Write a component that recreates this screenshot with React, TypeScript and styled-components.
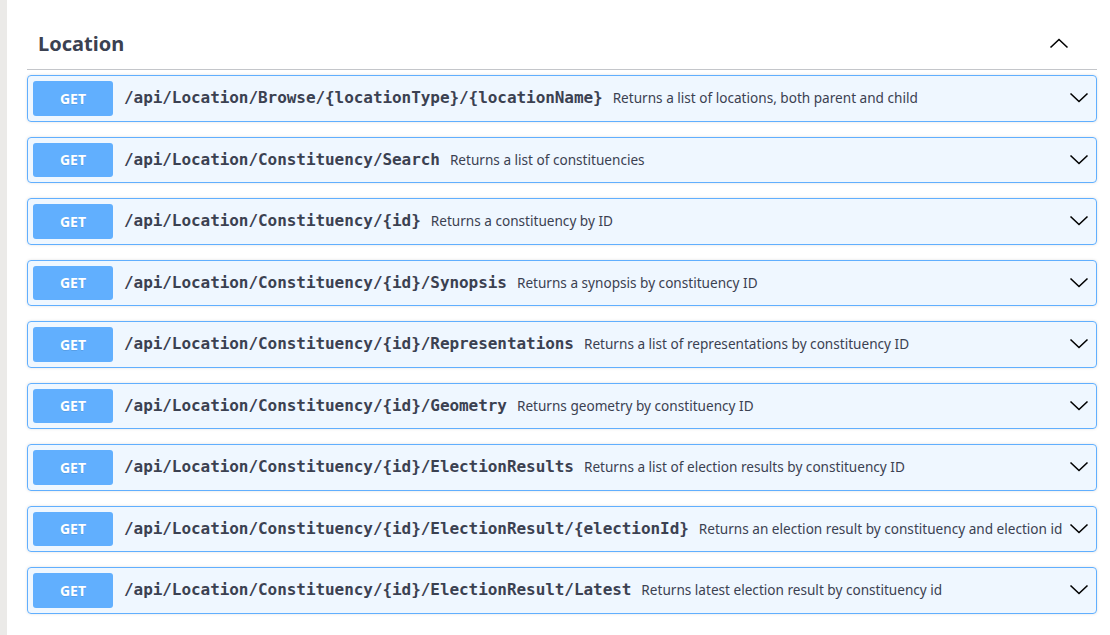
import React from 'react';
import styled, { createGlobalStyle } from 'styled-components';

const GlobalStyle = createGlobalStyle`
  html, body {
    margin: 0;
    padding: 0;
    background: #ffffff;
  }
  * {
    box-sizing: border-box;
  }
`;

const Page = styled.div`
  min-height: 100vh;
  border-left: 7px solid #ebeae8;
  padding: 0 13px 0 20px;
  font-family: "Noto Sans", "Open Sans", sans-serif;
  color: #3b4151;
`;

const TagHeader = styled.div`
  display: flex;
  align-items: center;
  justify-content: space-between;
  height: 70px;
  padding: 18px 26px 0 11px;
  border-bottom: 1px solid rgba(59, 65, 81, 0.3);
  margin-bottom: 5px;
`;

const TagTitle = styled.h4`
  margin: 0;
  font-size: 20px;
  font-weight: 700;
  color: #3b4151;
`;

const OpList = styled.div`
  display: flex;
  flex-direction: column;
  gap: 15px;
`;

const OpBlock = styled.div`
  display: flex;
  align-items: center;
  height: 46.5px;
  padding: 0 5px;
  background: rgba(97, 175, 254, 0.1);
  border: 1px solid #61affe;
  border-radius: 4px;
  box-shadow: 0 0 3px rgba(0, 0, 0, 0.12);
`;

const MethodBadge = styled.span`
  flex: 0 0 80px;
  height: 34.5px;
  display: flex;
  align-items: center;
  justify-content: center;
  background: #61affe;
  color: #ffffff;
  border-radius: 3px;
  font-size: 14px;
  font-weight: 700;
  text-shadow: 0 1px 0 rgba(0, 0, 0, 0.1);
`;

const Path = styled.span`
  padding: 0 10px 0 11px;
  font-family: "DejaVu Sans Mono", monospace;
  font-size: 16px;
  font-weight: 700;
  letter-spacing: -0.06px;
  color: #3b4151;
  white-space: nowrap;
  margin-top: -1px;
`;

const Description = styled.span`
  flex: 1;
  font-size: 13.6px;
  color: #3b4151;
  white-space: nowrap;
  overflow: hidden;
  margin-top: -1px;
`;

const Arrow = styled.svg`
  flex: 0 0 20px;
  margin-left: 2px;
  margin-right: 2px;
`;

const Chevron = ({ up }: { up?: boolean }) => (
  <Arrow width="20" height="20" viewBox="0 0 20 20">
    <polyline
      points={up ? '1.5,13.5 10,5.5 18.5,13.5' : '1.5,5.5 10,13.5 18.5,5.5'}
      fill="none"
      stroke="#000"
      strokeWidth="1.6"
    />
  </Arrow>
);

const operations = [
  ['/api/Location/Browse/{locationType}/{locationName}', 'Returns a list of locations, both parent and child'],
  ['/api/Location/Constituency/Search', 'Returns a list of constituencies'],
  ['/api/Location/Constituency/{id}', 'Returns a constituency by ID'],
  ['/api/Location/Constituency/{id}/Synopsis', 'Returns a synopsis by constituency ID'],
  ['/api/Location/Constituency/{id}/Representations', 'Returns a list of representations by constituency ID'],
  ['/api/Location/Constituency/{id}/Geometry', 'Returns geometry by constituency ID'],
  ['/api/Location/Constituency/{id}/ElectionResults', 'Returns a list of election results by constituency ID'],
  ['/api/Location/Constituency/{id}/ElectionResult/{electionId}', 'Returns an election result by constituency and election id'],
  ['/api/Location/Constituency/{id}/ElectionResult/Latest', 'Returns latest election result by constituency id'],
];

export default function App() {
  return (
    <>
      <GlobalStyle />
      <Page>
        <TagHeader>
          <TagTitle>Location</TagTitle>
          <Chevron up />
        </TagHeader>
        <OpList>
          {operations.map(([path, desc]) => (
            <OpBlock key={path}>
              <MethodBadge>GET</MethodBadge>
              <Path>{path}</Path>
              <Description>{desc}</Description>
              <Chevron />
            </OpBlock>
          ))}
        </OpList>
      </Page>
    </>
  );
}
